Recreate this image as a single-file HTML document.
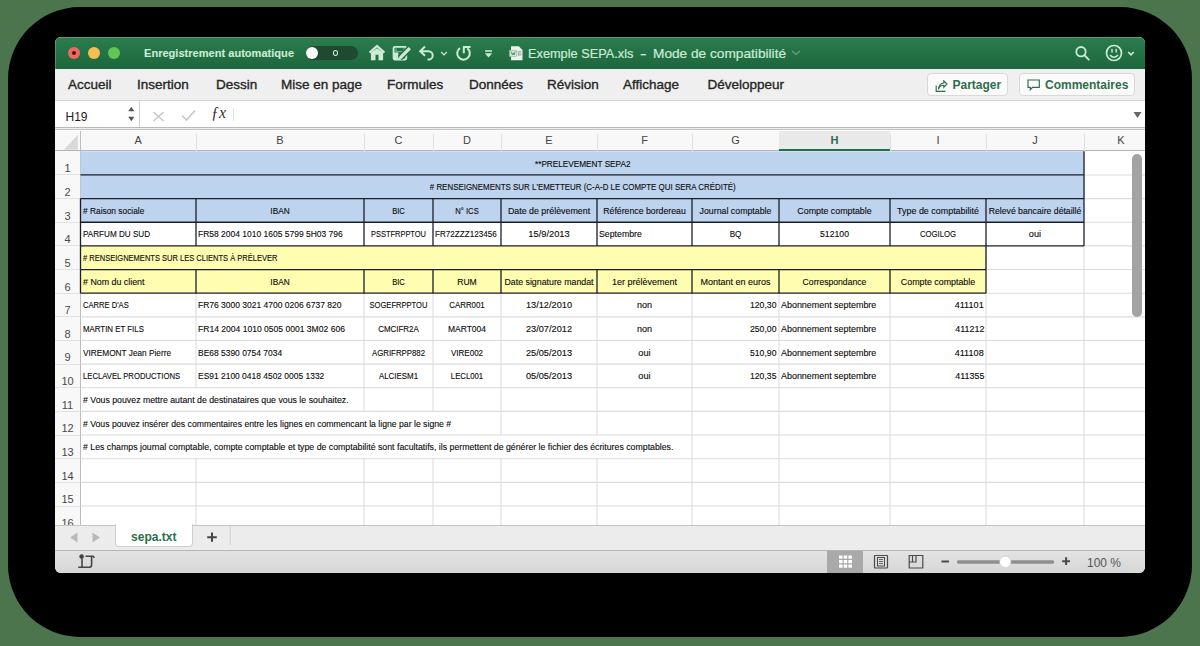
<!DOCTYPE html><html><head><meta charset="utf-8"><style>
*{margin:0;padding:0;box-sizing:border-box}
html,body{width:1200px;height:646px;overflow:hidden;background:#4d754d;font-family:"Liberation Sans",sans-serif}
.a{position:absolute}
#shadow{left:8px;top:7px;width:1184px;height:630px;border-radius:72px;background:#000}
#win{left:55px;top:37px;width:1090px;height:536px;border-radius:6px;overflow:hidden;background:#fff}
#title{left:0;top:0;width:1090px;height:32px;box-shadow:inset 1px 0 0 rgba(255,255,255,0.22);background:linear-gradient(#5c9a74 0,#5c9a74 1px,#2b7c4e 1px,#257549 35%,#1e663c)}
#tabs{left:0;top:32px;width:1090px;height:32px;background:linear-gradient(#e4f2e8 0,#e4f2e8 1px,#f0f0f0 1px,#efefef);border-bottom:1px solid #d3d3d3}
.tab{top:8px;font-size:13.5px;color:#262626;white-space:nowrap;-webkit-text-stroke:0.35px #262626}
.tl{width:12px;height:12px;border-radius:50%;top:11px}
.c{position:absolute;font-size:9px;color:#0c0c0c;-webkit-text-stroke:0.12px #0c0c0c;white-space:nowrap;line-height:23px;height:23px;overflow:visible}
.btn{top:36.3px;height:23.2px;border:1px solid #d9d9d9;border-radius:4px;background:#fbfbfb;font-weight:bold;font-size:12px;color:#2d6e4a;white-space:nowrap}
.hdr{position:absolute;font-size:11px;color:#4a4a4a;text-align:center;line-height:20px}
.rn{position:absolute;font-size:11px;color:#4a4a4a;text-align:center;width:25px;left:0}
</style></head><body>
<div id="shadow" class="a"></div>
<div id="win" class="a">

<div id="title" class="a">
<div class="a tl" style="left:13px;background:#ee6a5f;top:9.8px"><div class="a" style="left:4px;top:4px;width:4px;height:4px;border-radius:50%;background:#5e0c08"></div></div>
<div class="a tl" style="left:33px;background:#f6be4f;top:9.8px"></div>
<div class="a tl" style="left:53px;background:#62c554;top:9.8px"></div>
<div class="a" style="left:89.26px;top:10.7px;font-size:11px;font-weight:bold;color:#cdebd5;white-space:nowrap;line-height:1;transform:scaleX(1.006);transform-origin:0 0;-webkit-text-stroke:0.1px #cdebd5">Enregistrement automatique</div>
<div class="a" style="left:250.5px;top:8.8px;width:52px;height:14.5px;border-radius:8px;background:#1f4a31"></div>
<div class="a" style="left:250.8px;top:9.8px;width:12.5px;height:12.5px;border-radius:50%;background:#fbfbfb"></div>
<div class="a" style="left:277.6px;top:13px;width:5.6px;height:6px;border-radius:50%;border:1.4px solid #cdebd5"></div>
<svg class="a" style="left:0;top:0" width="1090" height="32" viewBox="55 37 1090 32" fill="none" stroke="#cdebd5" stroke-width="2">
<path d="M369.6 52.6 L377 45.9 L384.4 52.6" stroke-width="2.1"/>
<path d="M370.9 52.6 L377 48.2 L383.1 52.6 V60.2 H378.5 V54.8 H375.5 V60.2 H370.9 Z" fill="#cdebd5" stroke="none"/>
<rect x="393.6" y="46.9" width="12.6" height="12.6" rx="1.2" stroke-width="1.9"/>
<rect x="393.4" y="52.5" width="5" height="7.2" fill="#cdebd5" stroke="none"/>
<path d="M404 48.3 V51.6 H396 V48.3" stroke-width="1.2" stroke="#cdebd5" opacity="0.5"/>
<path d="M399.8 58.2 L409.8 48.2" stroke="#216f44" stroke-width="6"/>
<path d="M400.2 57.8 L409.8 48.2" stroke-width="3.3"/>
<path d="M398.3 60.1 L399.2 56.8 L401.5 59.1 Z" fill="#cdebd5" stroke="none"/>
<path d="M425 46.5 L420.2 51.2 L425 55.8 M420.5 51.2 H428.5 A4.2 4.2 0 0 1 428.5 59.6 H427.5" stroke-width="2"/>
<path d="M441.2 52 L444 54.8 L446.8 52" stroke-width="1.2"/>
<path d="M460 48.1 A6.3 6.3 0 1 0 467.3 48.3 M463.8 47 V53.2 M463 47 H470.5" stroke-width="2"/>
<path d="M485 51 H492" stroke-width="1.6"/>
<path d="M484.8 53.3 H492.2 L488.5 57.5 Z" fill="#cdebd5" stroke="none"/>
<circle cx="1081" cy="51.7" r="4.7" stroke-width="1.8"/>
<path d="M1084.4 55.2 L1088.8 59.6" stroke-width="1.9" stroke-linecap="round"/>
<circle cx="1114" cy="53" r="7.5" stroke-width="1.7"/>
<path d="M1112 49.6 V52 M1116.2 49.6 V52" stroke-width="1.5" stroke-linecap="round"/>
<path d="M1110 55 Q1114 59.5 1118 55" stroke-width="1.6"/>
<path d="M1128.2 52 L1131 54.8 L1133.8 52" stroke-width="1.6"/>
</svg>
<svg class="a" style="left:453px;top:7.5px" width="16" height="17" viewBox="0 0 16 17">
<path d="M3 1.3 H10.8 L14.5 5 V15.3 H3 Z" fill="#eaf4ed"/>
<path d="M9.5 6.5 H13.5 M9.5 8.2 H13.5 M9.5 9.9 H13.5 M10.5 6 V11 M12 6 V11" stroke="#8ca596" stroke-width="0.6"/>
<rect x="1.6" y="5.3" width="6.8" height="6" fill="#cfe9d5" stroke="#9ab7a3" stroke-width="0.7"/>
<path d="M3 6.6 L4.4 10 L5.2 7.8 L6 10 L7.2 6.6" stroke="#5f7467" stroke-width="0.8" fill="none"/>
</svg>
<div class="a" style="left:473.18px;top:10.3px;font-size:13px;font-weight:normal;color:#cdebd5;white-space:nowrap;line-height:1;transform:scaleX(0.981);transform-origin:0 0;-webkit-text-stroke:0.2px #cdebd5">Exemple SEPA.xls</div>
<div class="a" style="left:585.48px;top:10.3px;font-size:13px;font-weight:normal;color:#cdebd5;white-space:nowrap;line-height:1;transform:scaleX(1.520);transform-origin:0 0;-webkit-text-stroke:0.2px #cdebd5">-</div>
<div class="a" style="left:598.48px;top:10.3px;font-size:13px;font-weight:normal;color:#cdebd5;white-space:nowrap;line-height:1;transform:scaleX(1.052);transform-origin:0 0;-webkit-text-stroke:0.2px #cdebd5">Mode de compatibilité</div>
<svg class="a" style="left:736px;top:12px" width="10" height="8"><path d="M1 2 L5 5.5 L9 2" stroke="#6fa483" stroke-width="1.1" fill="none"/></svg>
</div>
<div id="tabs" class="a">
<div class="a tab" style="left:13px">Accueil</div>
<div class="a tab" style="left:82px">Insertion</div>
<div class="a tab" style="left:161px">Dessin</div>
<div class="a tab" style="left:226px">Mise en page</div>
<div class="a tab" style="left:332px">Formules</div>
<div class="a tab" style="left:414px">Données</div>
<div class="a tab" style="left:492px">Révision</div>
<div class="a tab" style="left:568px">Affichage</div>
<div class="a tab" style="left:652.5px">Développeur</div>
</div>
<div class="a btn" style="left:871.5px;width:81.5px"><span class="a" style="left:25px;top:3.5px">Partager</span><svg class="a" style="left:7.5px;top:5.5px" width="14" height="13" viewBox="0 0 14 13" fill="none" stroke="#2d6e4a" stroke-width="1.15"><path d="M1.2 5.5 V11.3 H10.5"/><path d="M3.5 9.5 Q4.3 5.2 8.8 5.2 V7.3 L12 4 L8.8 0.9 V3 Q4 3.3 3.5 9.5"/></svg></div>
<div class="a btn" style="left:963.5px;width:116px"><span class="a" style="left:25.5px;top:3.5px">Commentaires</span><svg class="a" style="left:7.5px;top:5px" width="14" height="13" viewBox="0 0 14 13" fill="none" stroke="#2d6e4a" stroke-width="1.15"><path d="M1 1 H12.3 V8.3 H5.5 L3.3 10.8 V8.3 H1 Z"/></svg></div>
<div class="a" style="left:0;top:64px;width:1090px;height:27px;background:#fff"></div>
<div class="a" style="left:83.5px;top:64px;width:1px;height:27px;background:#cfcfcf"></div>
<div class="a" style="left:0;top:90px;width:1090px;height:3px;border-top:1px solid #b9b9b9;border-bottom:1px solid #c4c4c4;background:#ededed"></div>
<div class="a" style="left:10.5px;top:73px;font-size:12px;color:#222">H19</div>
<svg class="a" style="left:0;top:64px" width="240" height="27" viewBox="55 101 240 27">
<path d="M128.3 111.3 L131.3 106.8 L134.3 111.3 Z M128.3 116.8 L131.3 121.3 L134.3 116.8 Z" fill="#555"/>
<path d="M153.5 112 L163.5 121 M163.5 112 L153.5 121" stroke="#c6c6c6" stroke-width="1.5"/>
<path d="M182 115.5 L186.5 120 L195 110.5" stroke="#c6c6c6" stroke-width="1.6" fill="none"/>
<path d="M233.5 108 V121" stroke="#e2e2e2" stroke-width="1"/>
</svg>
<div class="a" style="left:156px;top:66.5px;font-family:'Liberation Serif',serif;font-style:italic;font-size:16px;color:#333">ƒx</div>
<svg class="a" style="left:1078px;top:74px" width="10" height="8"><path d="M0.5 1 H8.5 L4.5 7 Z" fill="#666"/></svg>
<div class="a" style="left:0;top:93.5px;width:1090px;height:20.8px;background:#f8f8f8;border-bottom:1px solid #b4b4b4"></div>
<svg class="a" style="left:8px;top:96.5px" width="16" height="17"><path d="M14.8 0.8 V15.8 H0.8 Z" fill="#d9d9d9"/></svg>
<div class="a" style="left:25px;top:93.5px;width:1px;height:20.8px;background:#bdbdbd"></div>
<div class="hdr" style="left:25.5px;top:93.0px;width:115.5px;color:#444;font-weight:normal">A</div>
<div class="a" style="left:140.5px;top:96.5px;width:1px;height:17.8px;background:#e0e0e0"></div>
<div class="hdr" style="left:141px;top:93.0px;width:168px;color:#444;font-weight:normal">B</div>
<div class="a" style="left:308.5px;top:96.5px;width:1px;height:17.8px;background:#e0e0e0"></div>
<div class="hdr" style="left:309px;top:93.0px;width:69px;color:#444;font-weight:normal">C</div>
<div class="a" style="left:377.5px;top:96.5px;width:1px;height:17.8px;background:#e0e0e0"></div>
<div class="hdr" style="left:378px;top:93.0px;width:68px;color:#444;font-weight:normal">D</div>
<div class="a" style="left:445.5px;top:96.5px;width:1px;height:17.8px;background:#e0e0e0"></div>
<div class="hdr" style="left:446px;top:93.0px;width:96px;color:#444;font-weight:normal">E</div>
<div class="a" style="left:541.5px;top:96.5px;width:1px;height:17.8px;background:#e0e0e0"></div>
<div class="hdr" style="left:542px;top:93.0px;width:95px;color:#444;font-weight:normal">F</div>
<div class="a" style="left:636.5px;top:96.5px;width:1px;height:17.8px;background:#e0e0e0"></div>
<div class="hdr" style="left:637px;top:93.0px;width:87px;color:#444;font-weight:normal">G</div>
<div class="a" style="left:723.5px;top:96.5px;width:1px;height:17.8px;background:#e0e0e0"></div>
<div class="a" style="left:724px;top:93.5px;width:111px;height:20.8px;background:#e9e9e9;border-bottom:2.5px solid #1f7246"></div>
<div class="hdr" style="left:724px;top:93.0px;width:111px;color:#2d6e4a;font-weight:bold">H</div>
<div class="a" style="left:834.5px;top:96.5px;width:1px;height:17.8px;background:#e0e0e0"></div>
<div class="hdr" style="left:835px;top:93.0px;width:96px;color:#444;font-weight:normal">I</div>
<div class="a" style="left:930.5px;top:96.5px;width:1px;height:17.8px;background:#e0e0e0"></div>
<div class="hdr" style="left:931px;top:93.0px;width:98px;color:#444;font-weight:normal">J</div>
<div class="a" style="left:1028.5px;top:96.5px;width:1px;height:17.8px;background:#e0e0e0"></div>
<div class="hdr" style="left:1029px;top:93.0px;width:74px;color:#444;font-weight:normal">K</div>
<div class="a" style="left:0;top:114.3px;width:25.5px;height:373.7px;background:#f8f8f8;border-right:1px solid #bdbdbd"></div>
<div class="rn" style="top:125.3px">1</div>
<div class="a" style="left:0;top:137.45px;width:24.5px;height:1px;background:#e2e2e2"></div>
<div class="rn" style="top:148.95px">2</div>
<div class="a" style="left:0;top:161.09px;width:24.5px;height:1px;background:#e2e2e2"></div>
<div class="rn" style="top:172.59px">3</div>
<div class="a" style="left:0;top:184.74px;width:24.5px;height:1px;background:#e2e2e2"></div>
<div class="rn" style="top:196.24px">4</div>
<div class="a" style="left:0;top:208.39px;width:24.5px;height:1px;background:#e2e2e2"></div>
<div class="rn" style="top:219.89px">5</div>
<div class="a" style="left:0;top:232.03px;width:24.5px;height:1px;background:#e2e2e2"></div>
<div class="rn" style="top:243.53px">6</div>
<div class="a" style="left:0;top:255.68px;width:24.5px;height:1px;background:#e2e2e2"></div>
<div class="rn" style="top:267.18px">7</div>
<div class="a" style="left:0;top:279.33px;width:24.5px;height:1px;background:#e2e2e2"></div>
<div class="rn" style="top:290.83px">8</div>
<div class="a" style="left:0;top:302.98px;width:24.5px;height:1px;background:#e2e2e2"></div>
<div class="rn" style="top:314.48px">9</div>
<div class="a" style="left:0;top:326.62px;width:24.5px;height:1px;background:#e2e2e2"></div>
<div class="rn" style="top:338.12px">10</div>
<div class="a" style="left:0;top:350.27px;width:24.5px;height:1px;background:#e2e2e2"></div>
<div class="rn" style="top:361.77px">11</div>
<div class="a" style="left:0;top:373.92px;width:24.5px;height:1px;background:#e2e2e2"></div>
<div class="rn" style="top:385.42px">12</div>
<div class="a" style="left:0;top:397.56px;width:24.5px;height:1px;background:#e2e2e2"></div>
<div class="rn" style="top:409.06px">13</div>
<div class="a" style="left:0;top:421.21px;width:24.5px;height:1px;background:#e2e2e2"></div>
<div class="rn" style="top:432.71px">14</div>
<div class="a" style="left:0;top:444.86px;width:24.5px;height:1px;background:#e2e2e2"></div>
<div class="rn" style="top:456.36px">15</div>
<div class="a" style="left:0;top:468.5px;width:24.5px;height:1px;background:#e2e2e2"></div>
<div class="rn" style="top:480px">16</div>
<div class="a" style="left:0;top:492.15px;width:24.5px;height:1px;background:#e2e2e2"></div>
<svg class="a" style="left:0;top:0" width="1090" height="488" viewBox="0 0 1090 488"><rect x="25.5" y="114.3" width="1003.5" height="70.94" fill="#bdd3ee"/><rect x="25.5" y="208.89" width="905.5" height="47.29" fill="#fffdb0"/><path d="M1029 137.95 L1103 137.95" stroke="#dcdcdc" stroke-width="1.1"/><path d="M1029 161.59 L1103 161.59" stroke="#dcdcdc" stroke-width="1.1"/><path d="M1029 185.24 L1103 185.24" stroke="#dcdcdc" stroke-width="1.1"/><path d="M1029 208.89 L1103 208.89" stroke="#dcdcdc" stroke-width="1.1"/><path d="M931 232.53 L1103 232.53" stroke="#dcdcdc" stroke-width="1.1"/><path d="M931 256.18 L1103 256.18" stroke="#dcdcdc" stroke-width="1.1"/><path d="M25.5 279.83 L1103 279.83" stroke="#dcdcdc" stroke-width="1.1"/><path d="M25.5 303.48 L1103 303.48" stroke="#dcdcdc" stroke-width="1.1"/><path d="M25.5 327.12 L1103 327.12" stroke="#dcdcdc" stroke-width="1.1"/><path d="M25.5 350.77 L1103 350.77" stroke="#dcdcdc" stroke-width="1.1"/><path d="M25.5 374.42 L1103 374.42" stroke="#dcdcdc" stroke-width="1.1"/><path d="M25.5 398.06 L1103 398.06" stroke="#dcdcdc" stroke-width="1.1"/><path d="M25.5 421.71 L1103 421.71" stroke="#dcdcdc" stroke-width="1.1"/><path d="M25.5 445.36 L1103 445.36" stroke="#dcdcdc" stroke-width="1.1"/><path d="M25.5 469 L1103 469" stroke="#dcdcdc" stroke-width="1.1"/><path d="M1029 114.3 L1029 137.95" stroke="#dcdcdc" stroke-width="1.1"/><path d="M1029 137.95 L1029 161.59" stroke="#dcdcdc" stroke-width="1.1"/><path d="M931 208.89 L931 232.53" stroke="#dcdcdc" stroke-width="1.1"/><path d="M1029 208.89 L1029 232.53" stroke="#dcdcdc" stroke-width="1.1"/><path d="M1029 232.53 L1029 256.18" stroke="#dcdcdc" stroke-width="1.1"/><path d="M141 256.18 L141 279.83" stroke="#dcdcdc" stroke-width="1.1"/><path d="M309 256.18 L309 279.83" stroke="#dcdcdc" stroke-width="1.1"/><path d="M378 256.18 L378 279.83" stroke="#dcdcdc" stroke-width="1.1"/><path d="M446 256.18 L446 279.83" stroke="#dcdcdc" stroke-width="1.1"/><path d="M542 256.18 L542 279.83" stroke="#dcdcdc" stroke-width="1.1"/><path d="M637 256.18 L637 279.83" stroke="#dcdcdc" stroke-width="1.1"/><path d="M724 256.18 L724 279.83" stroke="#dcdcdc" stroke-width="1.1"/><path d="M835 256.18 L835 279.83" stroke="#dcdcdc" stroke-width="1.1"/><path d="M931 256.18 L931 279.83" stroke="#dcdcdc" stroke-width="1.1"/><path d="M1029 256.18 L1029 279.83" stroke="#dcdcdc" stroke-width="1.1"/><path d="M141 279.83 L141 303.48" stroke="#dcdcdc" stroke-width="1.1"/><path d="M309 279.83 L309 303.48" stroke="#dcdcdc" stroke-width="1.1"/><path d="M378 279.83 L378 303.48" stroke="#dcdcdc" stroke-width="1.1"/><path d="M446 279.83 L446 303.48" stroke="#dcdcdc" stroke-width="1.1"/><path d="M542 279.83 L542 303.48" stroke="#dcdcdc" stroke-width="1.1"/><path d="M637 279.83 L637 303.48" stroke="#dcdcdc" stroke-width="1.1"/><path d="M724 279.83 L724 303.48" stroke="#dcdcdc" stroke-width="1.1"/><path d="M835 279.83 L835 303.48" stroke="#dcdcdc" stroke-width="1.1"/><path d="M931 279.83 L931 303.48" stroke="#dcdcdc" stroke-width="1.1"/><path d="M1029 279.83 L1029 303.48" stroke="#dcdcdc" stroke-width="1.1"/><path d="M141 303.48 L141 327.12" stroke="#dcdcdc" stroke-width="1.1"/><path d="M309 303.48 L309 327.12" stroke="#dcdcdc" stroke-width="1.1"/><path d="M378 303.48 L378 327.12" stroke="#dcdcdc" stroke-width="1.1"/><path d="M446 303.48 L446 327.12" stroke="#dcdcdc" stroke-width="1.1"/><path d="M542 303.48 L542 327.12" stroke="#dcdcdc" stroke-width="1.1"/><path d="M637 303.48 L637 327.12" stroke="#dcdcdc" stroke-width="1.1"/><path d="M724 303.48 L724 327.12" stroke="#dcdcdc" stroke-width="1.1"/><path d="M835 303.48 L835 327.12" stroke="#dcdcdc" stroke-width="1.1"/><path d="M931 303.48 L931 327.12" stroke="#dcdcdc" stroke-width="1.1"/><path d="M1029 303.48 L1029 327.12" stroke="#dcdcdc" stroke-width="1.1"/><path d="M141 327.12 L141 350.77" stroke="#dcdcdc" stroke-width="1.1"/><path d="M309 327.12 L309 350.77" stroke="#dcdcdc" stroke-width="1.1"/><path d="M378 327.12 L378 350.77" stroke="#dcdcdc" stroke-width="1.1"/><path d="M446 327.12 L446 350.77" stroke="#dcdcdc" stroke-width="1.1"/><path d="M542 327.12 L542 350.77" stroke="#dcdcdc" stroke-width="1.1"/><path d="M637 327.12 L637 350.77" stroke="#dcdcdc" stroke-width="1.1"/><path d="M724 327.12 L724 350.77" stroke="#dcdcdc" stroke-width="1.1"/><path d="M835 327.12 L835 350.77" stroke="#dcdcdc" stroke-width="1.1"/><path d="M931 327.12 L931 350.77" stroke="#dcdcdc" stroke-width="1.1"/><path d="M1029 327.12 L1029 350.77" stroke="#dcdcdc" stroke-width="1.1"/><path d="M309 350.77 L309 374.42" stroke="#dcdcdc" stroke-width="1.1"/><path d="M378 350.77 L378 374.42" stroke="#dcdcdc" stroke-width="1.1"/><path d="M446 350.77 L446 374.42" stroke="#dcdcdc" stroke-width="1.1"/><path d="M542 350.77 L542 374.42" stroke="#dcdcdc" stroke-width="1.1"/><path d="M637 350.77 L637 374.42" stroke="#dcdcdc" stroke-width="1.1"/><path d="M724 350.77 L724 374.42" stroke="#dcdcdc" stroke-width="1.1"/><path d="M835 350.77 L835 374.42" stroke="#dcdcdc" stroke-width="1.1"/><path d="M931 350.77 L931 374.42" stroke="#dcdcdc" stroke-width="1.1"/><path d="M1029 350.77 L1029 374.42" stroke="#dcdcdc" stroke-width="1.1"/><path d="M446 374.42 L446 398.06" stroke="#dcdcdc" stroke-width="1.1"/><path d="M542 374.42 L542 398.06" stroke="#dcdcdc" stroke-width="1.1"/><path d="M637 374.42 L637 398.06" stroke="#dcdcdc" stroke-width="1.1"/><path d="M724 374.42 L724 398.06" stroke="#dcdcdc" stroke-width="1.1"/><path d="M835 374.42 L835 398.06" stroke="#dcdcdc" stroke-width="1.1"/><path d="M931 374.42 L931 398.06" stroke="#dcdcdc" stroke-width="1.1"/><path d="M1029 374.42 L1029 398.06" stroke="#dcdcdc" stroke-width="1.1"/><path d="M637 398.06 L637 421.71" stroke="#dcdcdc" stroke-width="1.1"/><path d="M724 398.06 L724 421.71" stroke="#dcdcdc" stroke-width="1.1"/><path d="M835 398.06 L835 421.71" stroke="#dcdcdc" stroke-width="1.1"/><path d="M931 398.06 L931 421.71" stroke="#dcdcdc" stroke-width="1.1"/><path d="M1029 398.06 L1029 421.71" stroke="#dcdcdc" stroke-width="1.1"/><path d="M141 421.71 L141 445.36" stroke="#dcdcdc" stroke-width="1.1"/><path d="M309 421.71 L309 445.36" stroke="#dcdcdc" stroke-width="1.1"/><path d="M378 421.71 L378 445.36" stroke="#dcdcdc" stroke-width="1.1"/><path d="M446 421.71 L446 445.36" stroke="#dcdcdc" stroke-width="1.1"/><path d="M542 421.71 L542 445.36" stroke="#dcdcdc" stroke-width="1.1"/><path d="M637 421.71 L637 445.36" stroke="#dcdcdc" stroke-width="1.1"/><path d="M724 421.71 L724 445.36" stroke="#dcdcdc" stroke-width="1.1"/><path d="M835 421.71 L835 445.36" stroke="#dcdcdc" stroke-width="1.1"/><path d="M931 421.71 L931 445.36" stroke="#dcdcdc" stroke-width="1.1"/><path d="M1029 421.71 L1029 445.36" stroke="#dcdcdc" stroke-width="1.1"/><path d="M141 445.36 L141 469" stroke="#dcdcdc" stroke-width="1.1"/><path d="M309 445.36 L309 469" stroke="#dcdcdc" stroke-width="1.1"/><path d="M378 445.36 L378 469" stroke="#dcdcdc" stroke-width="1.1"/><path d="M446 445.36 L446 469" stroke="#dcdcdc" stroke-width="1.1"/><path d="M542 445.36 L542 469" stroke="#dcdcdc" stroke-width="1.1"/><path d="M637 445.36 L637 469" stroke="#dcdcdc" stroke-width="1.1"/><path d="M724 445.36 L724 469" stroke="#dcdcdc" stroke-width="1.1"/><path d="M835 445.36 L835 469" stroke="#dcdcdc" stroke-width="1.1"/><path d="M931 445.36 L931 469" stroke="#dcdcdc" stroke-width="1.1"/><path d="M1029 445.36 L1029 469" stroke="#dcdcdc" stroke-width="1.1"/><path d="M141 469 L141 488" stroke="#dcdcdc" stroke-width="1.1"/><path d="M309 469 L309 488" stroke="#dcdcdc" stroke-width="1.1"/><path d="M378 469 L378 488" stroke="#dcdcdc" stroke-width="1.1"/><path d="M446 469 L446 488" stroke="#dcdcdc" stroke-width="1.1"/><path d="M542 469 L542 488" stroke="#dcdcdc" stroke-width="1.1"/><path d="M637 469 L637 488" stroke="#dcdcdc" stroke-width="1.1"/><path d="M724 469 L724 488" stroke="#dcdcdc" stroke-width="1.1"/><path d="M835 469 L835 488" stroke="#dcdcdc" stroke-width="1.1"/><path d="M931 469 L931 488" stroke="#dcdcdc" stroke-width="1.1"/><path d="M1029 469 L1029 488" stroke="#dcdcdc" stroke-width="1.1"/><path d="M25.5 137.95 L1029 137.95" stroke="#1a1f2a" stroke-width="1.3"/><path d="M25.5 161.59 L1029 161.59" stroke="#1a1f2a" stroke-width="1.3"/><path d="M25.5 185.24 L1029 185.24" stroke="#1a1f2a" stroke-width="1.3"/><path d="M25.5 208.89 L1029 208.89" stroke="#1a1f2a" stroke-width="1.3"/><path d="M1029 114.3 L1029 208.89" stroke="#1a1f2a" stroke-width="1.3"/><path d="M25.5 161.59 L25.5 208.89" stroke="#1a1f2a" stroke-width="1.3"/><path d="M141 161.59 L141 208.89" stroke="#1a1f2a" stroke-width="1.3"/><path d="M309 161.59 L309 208.89" stroke="#1a1f2a" stroke-width="1.3"/><path d="M378 161.59 L378 208.89" stroke="#1a1f2a" stroke-width="1.3"/><path d="M446 161.59 L446 208.89" stroke="#1a1f2a" stroke-width="1.3"/><path d="M542 161.59 L542 208.89" stroke="#1a1f2a" stroke-width="1.3"/><path d="M637 161.59 L637 208.89" stroke="#1a1f2a" stroke-width="1.3"/><path d="M724 161.59 L724 208.89" stroke="#1a1f2a" stroke-width="1.3"/><path d="M835 161.59 L835 208.89" stroke="#1a1f2a" stroke-width="1.3"/><path d="M931 161.59 L931 208.89" stroke="#1a1f2a" stroke-width="1.3"/><path d="M25.5 232.53 L931 232.53" stroke="#1a1f2a" stroke-width="1.3"/><path d="M931 208.89 L931 232.53" stroke="#1a1f2a" stroke-width="1.3"/><path d="M25.5 208.89 L25.5 232.53" stroke="#1a1f2a" stroke-width="1.3"/><path d="M25.5 256.18 L931 256.18" stroke="#1a1f2a" stroke-width="1.3"/><path d="M25.5 232.53 L25.5 256.18" stroke="#1a1f2a" stroke-width="1.3"/><path d="M141 232.53 L141 256.18" stroke="#1a1f2a" stroke-width="1.3"/><path d="M309 232.53 L309 256.18" stroke="#1a1f2a" stroke-width="1.3"/><path d="M378 232.53 L378 256.18" stroke="#1a1f2a" stroke-width="1.3"/><path d="M446 232.53 L446 256.18" stroke="#1a1f2a" stroke-width="1.3"/><path d="M542 232.53 L542 256.18" stroke="#1a1f2a" stroke-width="1.3"/><path d="M637 232.53 L637 256.18" stroke="#1a1f2a" stroke-width="1.3"/><path d="M724 232.53 L724 256.18" stroke="#1a1f2a" stroke-width="1.3"/><path d="M835 232.53 L835 256.18" stroke="#1a1f2a" stroke-width="1.3"/><path d="M931 232.53 L931 256.18" stroke="#1a1f2a" stroke-width="1.3"/></svg>
<div class="c" style="left:25.5px;width:1003.5px;text-align:center;top:115.5px;line-height:23.65px;transform:scaleX(0.912);transform-origin:50% 0">**PRELEVEMENT SEPA2</div>
<div class="c" style="left:25.5px;width:1003.5px;text-align:center;top:139.15px;line-height:23.65px;transform:scaleX(0.881);transform-origin:50% 0"># RENSEIGNEMENTS SUR L'EMETTEUR (C-A-D LE COMPTE QUI SERA CRÉDITÉ)</div>
<div class="c" style="left:27.8px;top:162.79px;line-height:23.65px;transform:scaleX(0.929);transform-origin:0 0"># Raison sociale</div>
<div class="c" style="left:141px;width:168px;text-align:center;top:162.79px;line-height:23.65px;transform:scaleX(0.918);transform-origin:50% 0">IBAN</div>
<div class="c" style="left:309px;width:69px;text-align:center;top:162.79px;line-height:23.65px;transform:scaleX(0.846);transform-origin:50% 0">BIC</div>
<div class="c" style="left:378px;width:68px;text-align:center;top:162.79px;line-height:23.65px;transform:scaleX(0.853);transform-origin:50% 0">N° ICS</div>
<div class="c" style="left:446px;width:96px;text-align:center;top:162.79px;line-height:23.65px;transform:scaleX(0.984);transform-origin:50% 0">Date de prélèvement</div>
<div class="c" style="left:542px;width:95px;text-align:center;top:162.79px;line-height:23.65px;transform:scaleX(0.970);transform-origin:50% 0">Référence bordereau</div>
<div class="c" style="left:637px;width:87px;text-align:center;top:162.79px;line-height:23.65px;transform:scaleX(0.977);transform-origin:50% 0">Journal comptable</div>
<div class="c" style="left:724px;width:111px;text-align:center;top:162.79px;line-height:23.65px;transform:scaleX(0.984);transform-origin:50% 0">Compte comptable</div>
<div class="c" style="left:835px;width:96px;text-align:center;top:162.79px;line-height:23.65px;transform:scaleX(0.992);transform-origin:50% 0">Type de comptabilité</div>
<div class="c" style="left:931px;width:98px;text-align:center;top:162.79px;line-height:23.65px;transform:scaleX(0.964);transform-origin:50% 0">Relevé bancaire détaillé</div>
<div class="c" style="left:27.8px;top:186.44px;line-height:23.65px;transform:scaleX(0.902);transform-origin:0 0">PARFUM DU SUD</div>
<div class="c" style="left:143.3px;top:186.44px;line-height:23.65px;transform:scaleX(0.942);transform-origin:0 0">FR58 2004 1010 1605 5799 5H03 796</div>
<div class="c" style="left:309px;width:69px;text-align:center;top:186.44px;line-height:23.65px;transform:scaleX(0.828);transform-origin:50% 0">PSSTFRPPTOU</div>
<div class="c" style="left:380.3px;top:186.44px;line-height:23.65px;transform:scaleX(0.900);transform-origin:0 0">FR72ZZZ123456</div>
<div class="c" style="left:446px;width:96px;text-align:center;top:186.44px;line-height:23.65px;transform:scaleX(1.030);transform-origin:50% 0">15/9/2013</div>
<div class="c" style="left:544.3px;top:186.44px;line-height:23.65px;transform:scaleX(0.973);transform-origin:0 0">Septembre</div>
<div class="c" style="left:637px;width:87px;text-align:center;top:186.44px;line-height:23.65px;transform:scaleX(0.894);transform-origin:50% 0">BQ</div>
<div class="c" style="left:724px;width:111px;text-align:center;top:186.44px;line-height:23.65px;transform:scaleX(0.967);transform-origin:50% 0">512100</div>
<div class="c" style="left:835px;width:96px;text-align:center;top:186.44px;line-height:23.65px;transform:scaleX(0.862);transform-origin:50% 0">COGILOG</div>
<div class="c" style="left:931px;width:98px;text-align:center;top:186.44px;line-height:23.65px;transform:scaleX(1.020);transform-origin:50% 0">oui</div>
<div class="c" style="left:27.8px;top:210.09px;line-height:23.65px;transform:scaleX(0.836);transform-origin:0 0"># RENSEIGNEMENTS SUR LES CLIENTS À PRÉLEVER</div>
<div class="c" style="left:27.8px;top:233.73px;line-height:23.65px;transform:scaleX(0.983);transform-origin:0 0"># Nom du client</div>
<div class="c" style="left:141px;width:168px;text-align:center;top:233.73px;line-height:23.65px;transform:scaleX(0.918);transform-origin:50% 0">IBAN</div>
<div class="c" style="left:309px;width:69px;text-align:center;top:233.73px;line-height:23.65px;transform:scaleX(0.846);transform-origin:50% 0">BIC</div>
<div class="c" style="left:378px;width:68px;text-align:center;top:233.73px;line-height:23.65px;transform:scaleX(0.950);transform-origin:50% 0">RUM</div>
<div class="c" style="left:446px;width:96px;text-align:center;top:233.73px;line-height:23.65px;transform:scaleX(0.978);transform-origin:50% 0">Date signature mandat</div>
<div class="c" style="left:542px;width:95px;text-align:center;top:233.73px;line-height:23.65px;transform:scaleX(0.996);transform-origin:50% 0">1er prélèvement</div>
<div class="c" style="left:637px;width:87px;text-align:center;top:233.73px;line-height:23.65px;transform:scaleX(1.002);transform-origin:50% 0">Montant en euros</div>
<div class="c" style="left:724px;width:111px;text-align:center;top:233.73px;line-height:23.65px;transform:scaleX(0.958);transform-origin:50% 0">Correspondance</div>
<div class="c" style="left:835px;width:96px;text-align:center;top:233.73px;line-height:23.65px;transform:scaleX(0.984);transform-origin:50% 0">Compte comptable</div>
<div class="c" style="left:27.8px;top:257.38px;line-height:23.65px;transform:scaleX(0.843);transform-origin:0 0">CARRE D'AS</div>
<div class="c" style="left:143.3px;top:257.38px;line-height:23.65px;transform:scaleX(0.943);transform-origin:0 0">FR76 3000 3021 4700 0206 6737 820</div>
<div class="c" style="left:309px;width:69px;text-align:center;top:257.38px;line-height:23.65px;transform:scaleX(0.842);transform-origin:50% 0">SOGEFRPPTOU</div>
<div class="c" style="left:378px;width:68px;text-align:center;top:257.38px;line-height:23.65px;transform:scaleX(0.876);transform-origin:50% 0">CARR001</div>
<div class="c" style="left:446px;width:96px;text-align:center;top:257.38px;line-height:23.65px;transform:scaleX(1.023);transform-origin:50% 0">13/12/2010</div>
<div class="c" style="left:542px;width:95px;text-align:center;top:257.38px;line-height:23.65px;transform:scaleX(1.004);transform-origin:50% 0">non</div>
<div class="c" style="right:368px;top:257.38px;line-height:23.65px;transform:scaleX(0.966);transform-origin:100% 0">120,30</div>
<div class="c" style="left:726.3px;top:257.38px;line-height:23.65px;transform:scaleX(0.992);transform-origin:0 0">Abonnement septembre</div>
<div class="c" style="right:161px;top:257.38px;line-height:23.65px;transform:scaleX(1.012);transform-origin:100% 0">411101</div>
<div class="c" style="left:27.8px;top:281.03px;line-height:23.65px;transform:scaleX(0.874);transform-origin:0 0">MARTIN ET FILS</div>
<div class="c" style="left:143.3px;top:281.03px;line-height:23.65px;transform:scaleX(0.950);transform-origin:0 0">FR14 2004 1010 0505 0001 3M02 606</div>
<div class="c" style="left:309px;width:69px;text-align:center;top:281.03px;line-height:23.65px;transform:scaleX(0.885);transform-origin:50% 0">CMCIFR2A</div>
<div class="c" style="left:378px;width:68px;text-align:center;top:281.03px;line-height:23.65px;transform:scaleX(0.943);transform-origin:50% 0">MART004</div>
<div class="c" style="left:446px;width:96px;text-align:center;top:281.03px;line-height:23.65px;transform:scaleX(1.023);transform-origin:50% 0">23/07/2012</div>
<div class="c" style="left:542px;width:95px;text-align:center;top:281.03px;line-height:23.65px;transform:scaleX(1.004);transform-origin:50% 0">non</div>
<div class="c" style="right:368px;top:281.03px;line-height:23.65px;transform:scaleX(0.966);transform-origin:100% 0">250,00</div>
<div class="c" style="left:726.3px;top:281.03px;line-height:23.65px;transform:scaleX(0.992);transform-origin:0 0">Abonnement septembre</div>
<div class="c" style="right:161px;top:281.03px;line-height:23.65px;transform:scaleX(0.989);transform-origin:100% 0">411212</div>
<div class="c" style="left:27.8px;top:304.68px;line-height:23.65px;transform:scaleX(0.918);transform-origin:0 0">VIREMONT Jean Pierre</div>
<div class="c" style="left:143.3px;top:304.68px;line-height:23.65px;transform:scaleX(0.939);transform-origin:0 0">BE68 5390 0754 7034</div>
<div class="c" style="left:309px;width:69px;text-align:center;top:304.68px;line-height:23.65px;transform:scaleX(0.870);transform-origin:50% 0">AGRIFRPP882</div>
<div class="c" style="left:378px;width:68px;text-align:center;top:304.68px;line-height:23.65px;transform:scaleX(0.894);transform-origin:50% 0">VIRE002</div>
<div class="c" style="left:446px;width:96px;text-align:center;top:304.68px;line-height:23.65px;transform:scaleX(1.023);transform-origin:50% 0">25/05/2013</div>
<div class="c" style="left:542px;width:95px;text-align:center;top:304.68px;line-height:23.65px;transform:scaleX(1.020);transform-origin:50% 0">oui</div>
<div class="c" style="right:368px;top:304.68px;line-height:23.65px;transform:scaleX(0.966);transform-origin:100% 0">510,90</div>
<div class="c" style="left:726.3px;top:304.68px;line-height:23.65px;transform:scaleX(0.992);transform-origin:0 0">Abonnement septembre</div>
<div class="c" style="right:161px;top:304.68px;line-height:23.65px;transform:scaleX(1.012);transform-origin:100% 0">411108</div>
<div class="c" style="left:27.8px;top:328.32px;line-height:23.65px;transform:scaleX(0.855);transform-origin:0 0">LECLAVEL PRODUCTIONS</div>
<div class="c" style="left:143.3px;top:328.32px;line-height:23.65px;transform:scaleX(0.938);transform-origin:0 0">ES91 2100 0418 4502 0005 1332</div>
<div class="c" style="left:309px;width:69px;text-align:center;top:328.32px;line-height:23.65px;transform:scaleX(0.878);transform-origin:50% 0">ALCIESM1</div>
<div class="c" style="left:378px;width:68px;text-align:center;top:328.32px;line-height:23.65px;transform:scaleX(0.861);transform-origin:50% 0">LECL001</div>
<div class="c" style="left:446px;width:96px;text-align:center;top:328.32px;line-height:23.65px;transform:scaleX(1.023);transform-origin:50% 0">05/05/2013</div>
<div class="c" style="left:542px;width:95px;text-align:center;top:328.32px;line-height:23.65px;transform:scaleX(1.020);transform-origin:50% 0">oui</div>
<div class="c" style="right:368px;top:328.32px;line-height:23.65px;transform:scaleX(0.966);transform-origin:100% 0">120,35</div>
<div class="c" style="left:726.3px;top:328.32px;line-height:23.65px;transform:scaleX(0.992);transform-origin:0 0">Abonnement septembre</div>
<div class="c" style="right:161px;top:328.32px;line-height:23.65px;transform:scaleX(0.989);transform-origin:100% 0">411355</div>
<div class="c" style="left:27.8px;top:351.97px;line-height:23.65px;transform:scaleX(0.974);transform-origin:0 0"># Vous pouvez mettre autant de destinataires que vous le souhaitez.</div>
<div class="c" style="left:27.8px;top:375.62px;line-height:23.65px;transform:scaleX(0.963);transform-origin:0 0"># Vous pouvez insérer des commentaires entre les lignes en commencant la ligne par le signe #</div>
<div class="c" style="left:27.8px;top:399.26px;line-height:23.65px;transform:scaleX(0.973);transform-origin:0 0"># Les champs journal comptable, compte comptable et type de comptabilité sont facultatifs, ils permettent de générer le fichier des écritures comptables.</div>
<div class="a" style="left:1077px;top:117px;width:9.7px;height:162.5px;border-radius:5px;background:#a3a3a3"></div>
<div class="a" style="left:0;top:488px;width:1090px;height:25px;background:#ececec;border-top:1px solid #c4c4c4"></div>
<svg class="a" style="left:0;top:488px" width="240" height="25" viewBox="55 525 240 25"><path d="M77.5 532.5 V542.5 L70 537.5 Z M92.5 532.5 V542.5 L100 537.5 Z" fill="#b9b9b9"/><path d="M212 532.5 V541.8 M207.2 537.2 H216.8" stroke="#454545" stroke-width="2"/><path d="M230.3 526 V545" stroke="#d2d2d2" stroke-width="1"/></svg>
<div class="a" style="left:60px;top:487px;width:78px;height:22.5px;background:#fff;border:1px solid #cfcfcf;border-top:none;border-radius:0 0 4px 4px"></div>
<div class="a" style="left:76.2px;top:493.5px;font-size:12.6px;font-weight:bold;color:#2e6f4b;white-space:nowrap;line-height:1;transform:scaleX(0.957);transform-origin:0 0;">sepa.txt</div>
<div class="a" style="left:0;top:513px;width:1090px;height:24px;background:linear-gradient(#e3e3e3,#d6d6d6);border-top:1px solid #b5b5b5"></div>
<div class="a" style="left:772px;top:514px;width:36px;height:23px;background:#a9a9a9"></div>
<svg class="a" style="left:0;top:513px" width="1090" height="23" viewBox="55 550 1090 23">
<circle cx="81.6" cy="556.6" r="2.3" fill="#444"/><path d="M82 558.5 V566.5 M78.2 567.2 H89.5 Q91.6 567.2 91.6 565 V557 M85.5 556.3 H93 L94.5 557.8" stroke="#444" stroke-width="1.6" fill="none"/>
<g fill="#fff"><rect x="839" y="555.5" width="3.5" height="3.2"/><rect x="843.7" y="555.5" width="3.5" height="3.2"/><rect x="848.4" y="555.5" width="3.5" height="3.2"/>
<rect x="839" y="560" width="3.5" height="3.2"/><rect x="843.7" y="560" width="3.5" height="3.2"/><rect x="848.4" y="560" width="3.5" height="3.2"/>
<rect x="839" y="564.5" width="3.5" height="3.2"/><rect x="843.7" y="564.5" width="3.5" height="3.2"/><rect x="848.4" y="564.5" width="3.5" height="3.2"/></g>
<rect x="874.5" y="555.5" width="13" height="12.5" stroke="#4a4a4a" stroke-width="1.2" fill="none" rx="0.5"/>
<rect x="877.5" y="557.5" width="7" height="8.5" stroke="#4a4a4a" stroke-width="1" fill="none"/>
<path d="M879 559.5 H883 M879 561.5 H883 M879 563.5 H883" stroke="#4a4a4a" stroke-width="0.8"/>
<path d="M909.2 555.5 H922.8 V568 H909.2 Z M909.2 562 H916 V555.5 M912.5 555.5 V562" stroke="#4a4a4a" stroke-width="1.2" fill="none"/>
<path d="M941.5 561.5 H949" stroke="#4a4a4a" stroke-width="2"/>
<path d="M958.5 562 H1052.5" stroke="#8f8f8f" stroke-width="3.5" stroke-linecap="round"/>
<circle cx="1005.3" cy="561.8" r="5.6" fill="#fff" stroke="#c9c9c9" stroke-width="0.6"/>
<path d="M1062.2 561.2 H1070 M1066.1 557.3 V565.1" stroke="#4a4a4a" stroke-width="2"/>
</svg>
<div class="a" style="left:1031.9px;top:519.5px;font-size:12.5px;font-weight:normal;color:#555;white-space:nowrap;line-height:1;transform:scaleX(0.958);transform-origin:0 0;">100 %</div>
</div>
</body></html>
